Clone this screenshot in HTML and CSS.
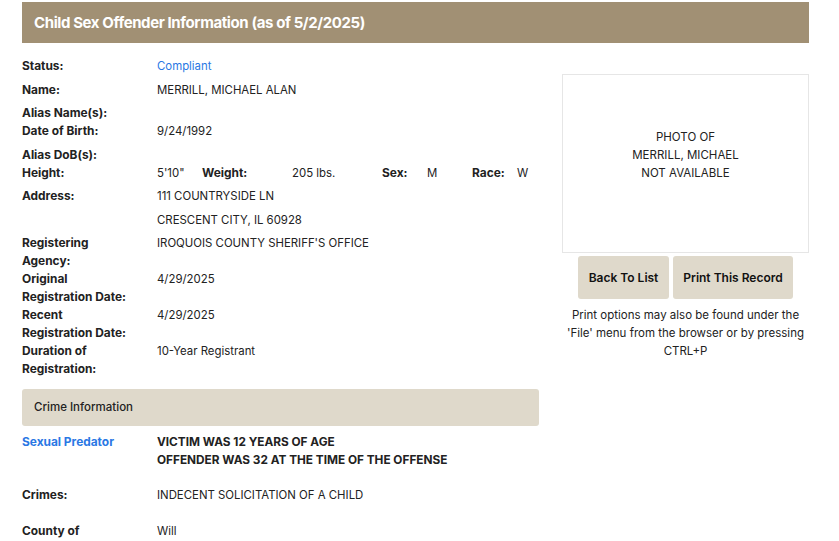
FILE: index.html
```html
<!DOCTYPE html>
<html>
<head>
<meta charset="utf-8">
<link rel="stylesheet" href="styles.css">
</head>
<body>
<div class="page">
  <div class="banner">Child Sex Offender Information (as of 5/2/2025)</div>
  <div class="content">
    <div class="left">
      <div class="row"><div class="label">Status:</div><div class="value"><div class="line link">Compliant</div></div></div>
      <div class="row"><div class="label">Name:</div><div class="value"><div class="line">MERRILL, MICHAEL ALAN</div></div></div>
      <div class="row"><div class="label">Alias Name(s):</div><div class="value"></div></div>
      <div class="row"><div class="label">Date of Birth:</div><div class="value"><div class="line">9/24/1992</div></div></div>
      <div class="row"><div class="label">Alias DoB(s):</div><div class="value"></div></div>
      <div class="row"><div class="label">Height:</div><div class="value"><div class="line stats">
        <span>5'10"</span><b>Weight:</b><span>205 lbs.</span><b>Sex:</b><span>M</span><b>Race:</b><span>W</span>
      </div></div></div>
      <div class="row"><div class="label">Address:</div><div class="value"><div class="line">111 COUNTRYSIDE LN</div><div class="line">CRESCENT CITY, IL 60928</div></div></div>
      <div class="row"><div class="label">Registering<br>Agency:</div><div class="value"><div class="line">IROQUOIS COUNTY SHERIFF'S OFFICE</div></div></div>
      <div class="row"><div class="label">Original<br>Registration Date:</div><div class="value"><div class="line">4/29/2025</div></div></div>
      <div class="row"><div class="label">Recent<br>Registration Date:</div><div class="value"><div class="line">4/29/2025</div></div></div>
      <div class="row"><div class="label">Duration of<br>Registration:</div><div class="value"><div class="line">10-Year Registrant</div></div></div>

      <div class="section">Crime Information</div>

      <div class="row crime"><div class="label link">Sexual Predator</div><div class="value strong"><div class="line">VICTIM WAS 12 YEARS OF AGE<br>OFFENDER WAS 32 AT THE TIME OF THE OFFENSE</div></div></div>
      <div class="row crime"><div class="label">Crimes:</div><div class="value"><div class="line">INDECENT SOLICITATION OF A CHILD</div></div></div>
      <div class="row crime"><div class="label">County of</div><div class="value"><div class="line">Will</div></div></div>
    </div>
    <div class="right">
      <div class="photo">PHOTO OF<br>MERRILL, MICHAEL<br>NOT AVAILABLE</div>
      <div class="buttons">
        <button class="btn back">Back To List</button>
        <button class="btn print">Print This Record</button>
      </div>
      <p class="note">Print options may also be found under the 'File' menu from the browser or by pressing CTRL+P</p>
    </div>
  </div>
</div>
</body>
</html>
```
FILE: styles.css
```css
* { box-sizing: border-box; }
body {
  margin: 0;
  background: #fff;
  font-family: Inter, "Liberation Sans", sans-serif;
  font-size: 11.4px;
  color: #222;
}
.page {
  width: 809px;
  padding: 2px 0 0 22px;
}
.banner {
  height: 41px;
  line-height: 41px;
  background: #a19074;
  color: #fff;
  font-weight: 700;
  font-size: 15px;
  letter-spacing: -0.4px;
  padding-left: 12px;
}
.content {
  display: flex;
  gap: 23px;
  margin-top: 14px;
}
.left { width: 517px; }
.right {
  width: 247px;
  padding-top: 17px;
}
.row {
  display: grid;
  grid-template-columns: 135px 1fr;
  line-height: 18px;
}
.label {
  font-weight: 700;
  font-size: 11.9px;
}
.line { padding-bottom: 5.5px; }
.link { color: #2a78e4; }
.label.link { color: #2a78e4; }
.strong { font-weight: 700; font-size: 11.8px; }
.stats {
  display: grid;
  grid-template-columns: 45px 90px 90px 45px 45px 45px 45px;
}
.stats b { font-size: 11.9px; }
.section {
  margin-top: 10.5px;
  height: 37px;
  line-height: 37px;
  background: #dfd9cb;
  border-radius: 3px;
  padding-left: 12px;
  font-size: 11.5px;
  font-weight: 500;
}
.section + .crime { margin-top: 7px; }
.crime .line { padding-bottom: 17.5px; }
.photo {
  height: 179px;
  border: 1px solid #e6e6e6;
  display: flex;
  align-items: center;
  justify-content: center;
  text-align: center;
  line-height: 18px;
  font-size: 11.5px;
  padding-bottom: 17px;
}
.buttons {
  display: flex;
  justify-content: center;
  gap: 4px;
  margin-top: 3px;
}
.btn {
  height: 43px;
  border: none;
  border-radius: 3px;
  background: #dfd9cb;
  font-family: Inter, "Liberation Sans", sans-serif;
  font-size: 12px;
  font-weight: 600;
  color: #111;
  padding: 0;
}
.back { width: 91px; }
.print { width: 120px; }
.note {
  margin: 7px 0 0;
  text-align: center;
  line-height: 18px;
  font-size: 11.5px;
}
```
